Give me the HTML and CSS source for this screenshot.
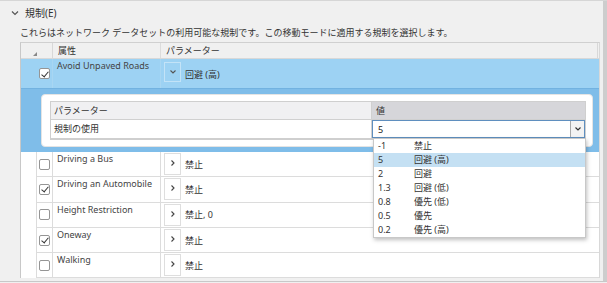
FILE: index.html
```html
<!DOCTYPE html>
<html lang="ja">
<head>
  <meta charset="UTF-8" />
  <title>規制</title>
  <link rel="stylesheet" href="styles.css">
</head>
<body>
  <div class="window">
    <div class="main">
      <div class="group-head">
        <svg class="group-chevron" width="8" height="6" viewBox="0 0 8 6"><path d="M1 1.5 L4 4.5 L7 1.5" fill="none" stroke="#555" stroke-width="1.2"/></svg>
        <span>規制(E)</span>
      </div>
      <p class="desc">これらはネットワーク データセットの利用可能な規制です。この移動モードに適用する規制を選択します。</p>

      <div class="grid">
        <div class="row head">
          <div class="c-corner"><span class="sort-tri"></span></div>
          <div class="c-attr">属性</div>
          <div class="c-param">パラメーター</div>
        </div>

        <div class="row selected">
          <div class="row-top">
            <div class="c-rh"></div>
            <div class="c-check"><span class="cb checked"></span></div>
            <div class="c-attr">Avoid Unpaved Roads</div>
            <div class="c-param">
              <span class="expander open">
                <svg width="8" height="6" viewBox="0 0 8 6"><path d="M1.5 1.5 L4 4 L6.5 1.5" fill="none" stroke="#555" stroke-width="1.1"/></svg>
              </span>
              <span>回避 (高)</span>
            </div>
          </div>
          <div class="details">
            <div class="details-card">
              <div class="sub-grid">
                <div class="sub-head">
                  <div class="s-name">パラメーター</div>
                  <div class="s-val">値</div>
                </div>
                <div class="sub-row">
                  <div class="s-name">規制の使用</div>
                  <div class="s-val combo">
                    <span class="combo-text">5</span>
                    <span class="combo-btn">
                      <svg width="8" height="6" viewBox="0 0 8 6"><path d="M1.5 1.5 L4 4 L6.5 1.5" fill="none" stroke="#333" stroke-width="1.2"/></svg>
                    </span>
                    <ul class="dropdown">
                      <li><span class="num">-1</span><span>禁止</span></li>
                      <li class="hot"><span class="num">5</span><span>回避 (高)</span></li>
                      <li><span class="num">2</span><span>回避</span></li>
                      <li><span class="num">1.3</span><span>回避 (低)</span></li>
                      <li><span class="num">0.8</span><span>優先 (低)</span></li>
                      <li><span class="num">0.5</span><span>優先</span></li>
                      <li><span class="num">0.2</span><span>優先 (高)</span></li>
                    </ul>
                  </div>
                </div>
              </div>
            </div>
          </div>
        </div>

        <div class="row">
          <div class="c-rh"></div>
          <div class="c-check"><span class="cb"></span></div>
          <div class="c-attr">Driving a Bus</div>
          <div class="c-param"><span class="expander"><svg width="6" height="8" viewBox="0 0 6 8"><path d="M1.5 1.5 L4 4 L1.5 6.5" fill="none" stroke="#444" stroke-width="1.1"/></svg></span><span>禁止</span></div>
        </div>
        <div class="row">
          <div class="c-rh"></div>
          <div class="c-check"><span class="cb checked"></span></div>
          <div class="c-attr">Driving an Automobile</div>
          <div class="c-param"><span class="expander"><svg width="6" height="8" viewBox="0 0 6 8"><path d="M1.5 1.5 L4 4 L1.5 6.5" fill="none" stroke="#444" stroke-width="1.1"/></svg></span><span>禁止</span></div>
        </div>
        <div class="row">
          <div class="c-rh"></div>
          <div class="c-check"><span class="cb"></span></div>
          <div class="c-attr">Height Restriction</div>
          <div class="c-param"><span class="expander"><svg width="6" height="8" viewBox="0 0 6 8"><path d="M1.5 1.5 L4 4 L1.5 6.5" fill="none" stroke="#444" stroke-width="1.1"/></svg></span><span>禁止, 0</span></div>
        </div>
        <div class="row">
          <div class="c-rh"></div>
          <div class="c-check"><span class="cb checked"></span></div>
          <div class="c-attr">Oneway</div>
          <div class="c-param"><span class="expander"><svg width="6" height="8" viewBox="0 0 6 8"><path d="M1.5 1.5 L4 4 L1.5 6.5" fill="none" stroke="#444" stroke-width="1.1"/></svg></span><span>禁止</span></div>
        </div>
        <div class="row last">
          <div class="c-rh"></div>
          <div class="c-check"><span class="cb"></span></div>
          <div class="c-attr">Walking</div>
          <div class="c-param"><span class="expander"><svg width="6" height="8" viewBox="0 0 6 8"><path d="M1.5 1.5 L4 4 L1.5 6.5" fill="none" stroke="#444" stroke-width="1.1"/></svg></span><span>禁止</span></div>
        </div>
      </div>
    </div>
    <div class="scrollbar"></div>
  </div>
</body>
</html>
```

FILE: styles.css
```css
* {
  box-sizing: border-box;
  margin: 0;
  padding: 0;
}

body {
  font-family: "Noto Sans", "Noto Sans CJK JP", sans-serif;
  font-size: 9px;
  color: #333;
  background-color: #f0f0f0;
}

.window {
  display: flex;
  height: 282px;
  border-top: 1px solid #d6d6d6;
  border-bottom: 1px solid #c8c8c8;
}

.main {
  flex: 1;
}

.scrollbar {
  width: 4px;
  background-color: #cdcdcd;
}

.group-head {
  display: flex;
  align-items: center;
  height: 23px;
  padding-left: 11px;
  font-size: 10px;
}

.group-chevron {
  margin-right: 6px;
}

.desc {
  height: 17px;
  line-height: 17px;
  padding-left: 20px;
  white-space: nowrap;
}

.grid {
  margin: 1px 3px 0 20px;
  border-top: 1px solid #d0d0d0;
  border-left: 1px solid #c8c8c8;
  border-right: 1px solid #d8d8d8;
  background-color: #fff;
}

.row,
.row-top {
  display: flex;
}

.row {
  height: 25.3px;
}

.row.head {
  height: 16px;
  background-color: #f0f0f0;
  border-bottom: 1px solid #d8d8d8;
}

.c-corner {
  position: relative;
  width: 32px;
  border-right: 1px solid #d8d8d8;
}

.sort-tri {
  position: absolute;
  left: 12px;
  bottom: 2px;
  width: 0;
  height: 0;
  border-left: 4px solid transparent;
  border-bottom: 4px solid #888;
}

.c-rh {
  width: 16px;
  border-right: 1px solid #dcdcdc;
}

.c-check {
  width: 16px;
  display: flex;
  align-items: center;
  justify-content: center;
  border-right: 1px solid #dcdcdc;
  border-bottom: 1px solid #dcdcdc;
}

.c-attr {
  width: 108px;
  padding: 1px 4px 0;
  border-right: 1px solid #dcdcdc;
  border-bottom: 1px solid #dcdcdc;
  line-height: 12px;
  white-space: nowrap;
  color: #444;
}

.c-param {
  flex: 1;
  display: flex;
  align-items: center;
  gap: 4px;
  padding-left: 3px;
  border-bottom: 1px solid #dcdcdc;
}

.row.head .c-attr,
.row.head .c-param {
  border-bottom: none;
  line-height: 15px;
  padding-top: 0;
  padding-left: 5px;
  color: #333;
}

.row.head .c-param {
  margin-right: 1px;
  border-right: 1px solid #d8d8d8;
}

.cb {
  position: relative;
  width: 11px;
  height: 11px;
  border: 1px solid #959595;
  border-radius: 2px;
  background-color: #fff;
}

.cb.checked::after {
  content: "";
  position: absolute;
  left: 2.5px;
  top: 0.5px;
  width: 3px;
  height: 6px;
  border-right: 1.3px solid #333;
  border-bottom: 1.3px solid #333;
  transform: rotate(40deg);
}

.expander {
  display: flex;
  align-items: center;
  justify-content: center;
  width: 17px;
  height: 22px;
  padding-bottom: 2px;
  border: 1px solid #dedede;
  background-color: #fff;
}

/* selected row with its detail panel */
.row.selected {
  display: block;
  height: auto;
  background-color: #9dd2f3;
}

.row-top {
  height: 29px;
}

.row.selected .c-rh,
.row.selected .c-check,
.row.selected .c-attr,
.row.selected .c-param {
  border-color: #a8d6f2;
  border-bottom: none;
}

.row.selected .c-check {
  align-items: flex-start;
  padding-top: 9px;
}

.row.selected .c-rh {
  border-right: none;
}

.row.selected .c-param {
  align-items: flex-start;
  padding-top: 3px;
}

.row.selected .c-param > span:last-child {
  margin-top: 6px;
}

.expander.open {
  height: 20px;
  background-color: transparent;
  border-color: #c3e3f7;
  align-items: flex-start;
  padding: 6px 0 0;
}

.details {
  height: 64px;
  padding: 5px 6px 5px 20px;
  background-color: #7fbde9;
  border-top: 1px solid #72b2e0;
}

.details-card {
  height: 53px;
  padding: 6px 6px 0 8px;
  background-color: #fff;
  border: 1px solid #e4e4e4;
  border-radius: 4px;
}

.sub-grid {
  border: 1px solid #cfcfcf;
  border-bottom-width: 2px;
}

.sub-head,
.sub-row {
  display: flex;
  height: 18px;
}

.sub-head {
  border-bottom: 1px solid #d0d0d0;
}

.s-name {
  width: 321px;
  padding-left: 3px;
  line-height: 17px;
  border-right: 1px solid #d0d0d0;
}

.sub-head .s-name {
  background-color: #f0f0f2;
}

.sub-head .s-val {
  flex: 1;
  padding-left: 4px;
  line-height: 17px;
  background-color: #d6d6da;
}

.combo {
  position: relative;
  flex: 1;
  display: flex;
  align-items: center;
  justify-content: space-between;
  border: 1px solid #5f8fbf;
}

.combo-text {
  padding-left: 5px;
  color: #222;
}

.combo-btn {
  display: flex;
  align-items: center;
  justify-content: center;
  width: 14px;
  height: 100%;
  border-left: 1px solid #a9a9a9;
  background-color: #f3f3f3;
}

.dropdown {
  position: absolute;
  top: 17px;
  left: 0;
  width: 213px;
  list-style: none;
  background-color: #fff;
  border: 1px solid #c8c8c8;
  box-shadow: 1px 2px 4px rgba(0, 0, 0, 0.25);
  z-index: 2;
}

.dropdown li {
  display: flex;
  height: 14px;
  line-height: 14px;
  padding-left: 4px;
  color: #333;
}

.dropdown li.hot {
  background-color: #c4e0f3;
}

.dropdown .num {
  width: 36px;
}
```
